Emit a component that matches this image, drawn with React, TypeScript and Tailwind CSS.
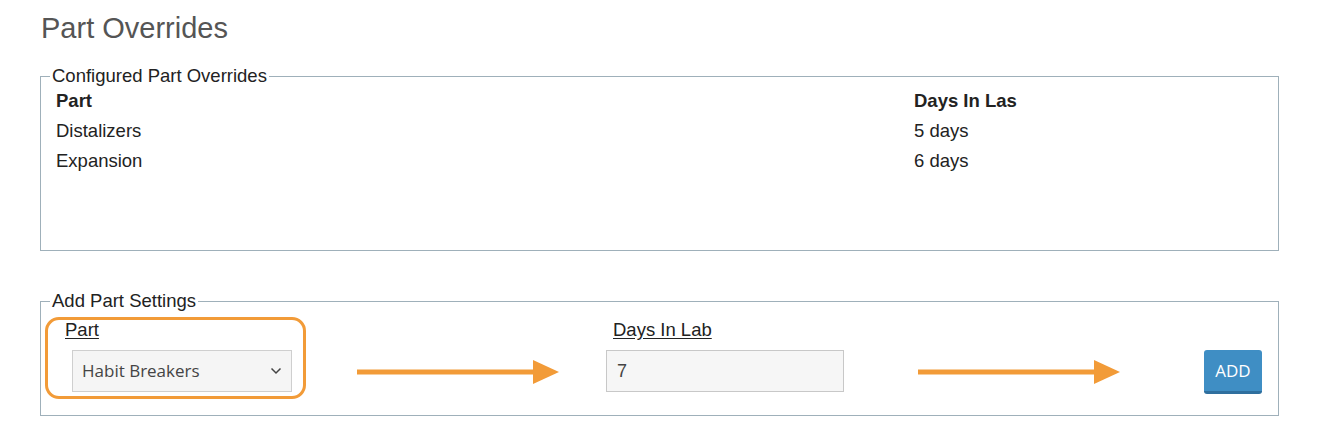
import React from "react"

const rows = [
  { part: "Distalizers", days: "5 days" },
  { part: "Expansion", days: "6 days" },
]

function Arrow() {
  return (
    <svg width="202" height="26" viewBox="0 0 202 26" className="block">
      <rect x="0" y="10.5" width="178" height="5" fill="#f29b38" />
      <polygon points="176,1 202,13 176,25" fill="#f29b38" />
    </svg>
  )
}

export default function App() {
  return (
    <div className="w-[1320px] h-[448px] bg-white pl-[40px] pr-[41px] pt-[12px] font-['Liberation_Sans',Arial,sans-serif] text-[#222]">
      <h1 className="text-[29px] leading-[33px] text-[#555] ml-[1px]">Part Overrides</h1>

      <fieldset className="mt-[21px] border border-[#9fb0ba] pb-[74px]">
        <legend className="ml-[9px] px-[2px] text-[18.5px] leading-[20px] text-[#222]">
          Configured Part Overrides
        </legend>
        <div className="pl-[15px] text-[18.5px] leading-[30px]">
          <div className="flex font-bold">
            <div className="w-[858px]">Part</div>
            <div>Days In Las</div>
          </div>
          {rows.map((r) => (
            <div key={r.part} className="flex">
              <div className="w-[858px]">{r.part}</div>
              <div>{r.days}</div>
            </div>
          ))}
        </div>
      </fieldset>

      <fieldset className="mt-[40px] border border-[#9fb0ba] pb-[16px]">
        <legend className="ml-[9px] px-[2px] text-[18.5px] leading-[20px] text-[#222]">
          Add Part Settings
        </legend>
        <div className="mt-[6px] flex items-start">
          <div className="ml-[4px] w-[261px] rounded-[14px] border-[3px] border-[#f29b38] pl-[17px] pb-[4px]">
            <div className="text-[18.5px] leading-[20px] underline underline-offset-2">Part</div>
            <div className="ml-[7px] mt-[10px] flex h-[42px] w-[220px] items-center justify-between border border-[#cfcfcf] bg-[#f5f5f5] pl-[9px] pr-[9px] font-['Open_Sans',sans-serif] text-[17px] text-[#444]">
              <span>Habit Breakers</span>
              <svg width="12" height="8" viewBox="0 0 12 8">
                <polyline points="1.5,1.5 6,6 10.5,1.5" fill="none" stroke="#444" strokeWidth="1.5" />
              </svg>
            </div>
          </div>

          <div className="ml-[51px] mt-[42px]">
            <Arrow />
          </div>

          <div className="ml-[47px] pt-[3px]">
            <div className="ml-[7px] text-[18.5px] leading-[20px] underline underline-offset-2">Days In Lab</div>
            <div className="mt-[10px] flex h-[42px] w-[238px] items-center border border-[#c8c8c8] bg-[#f6f6f6] pl-[10px] text-[18px] text-[#444]">
              7
            </div>
          </div>

          <div className="ml-[74px] mt-[42px]">
            <Arrow />
          </div>

          <button className="ml-[84px] mt-[33px] flex h-[44px] w-[58px] items-center justify-center rounded-[3px] border-b-[3px] border-[#2f6f9e] bg-[#3f8ec4] font-['Open_Sans',sans-serif] text-[17px] text-white">
            ADD
          </button>
        </div>
      </fieldset>
    </div>
  )
}
